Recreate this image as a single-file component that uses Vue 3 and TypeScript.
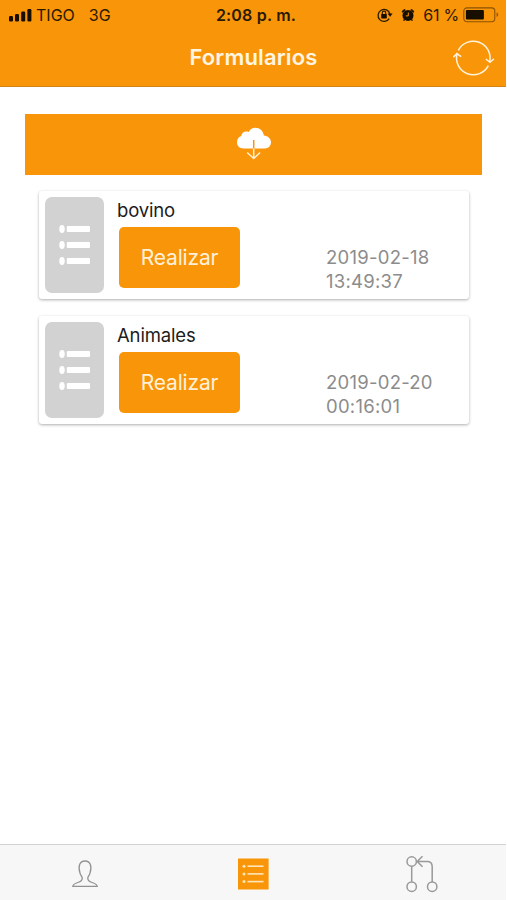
<script setup lang="ts">
interface FormItem {
  name: string
  date: string
  time: string
}

const forms: FormItem[] = [
  { name: 'bovino', date: '2019-02-18', time: '13:49:37' },
  { name: 'Animales', date: '2019-02-20', time: '00:16:01' },
]
</script>

<template>
  <div class="screen">
    <header class="header">
      <div class="status">
        <div class="status-left">
          <svg class="signal" width="24" height="14" viewBox="0 0 24 14">
            <rect x="1" y="8" width="4" height="5.5" rx="1.2" />
            <rect x="7" y="6" width="4" height="7.5" rx="1.2" />
            <rect x="13.2" y="3.5" width="4" height="10" rx="1.2" />
            <rect x="19.4" y="1" width="4" height="12.5" rx="1.2" />
          </svg>
          <span class="carrier">TIGO</span>
          <span class="network">3G</span>
        </div>
        <span class="clock">2:08 p. m.</span>
        <div class="status-right">
          <svg class="lock" width="18" height="16" viewBox="0 0 18 16">
            <path d="M13.2 11.6A6 6 0 1 1 13.9 7" fill="none" stroke="#2a1a00" stroke-width="1.3" />
            <path d="M11.6 6.6h5l-2.5 3.2z" />
            <rect x="5.2" y="7" width="5.6" height="4.4" rx="0.6" />
            <path d="M6.3 7.2V5.8a1.7 1.7 0 0 1 3.4 0v1.4" fill="none" stroke="#2a1a00" stroke-width="1.1" />
          </svg>
          <svg class="alarm" width="14" height="14" viewBox="0 0 14 14">
            <circle cx="7" cy="7.4" r="5.5" />
            <path d="M1.8 3.6 3.6 2.1M12.2 3.6 10.4 2.1" stroke="#2a1a00" stroke-width="2" stroke-linecap="round" />
            <path d="M3.6 11.4 2.9 12.3M10.4 11.4l.7.9" stroke="#2a1a00" stroke-width="1.4" stroke-linecap="round" />
            <path d="M7.3 4.5v3.4H4.8" fill="none" stroke="#f99509" stroke-width="1" />
          </svg>
          <span class="percent">61 %</span>
          <svg class="battery" width="37" height="16" viewBox="0 0 37 16">
            <rect x="0.8" y="0.9" width="31" height="13.8" rx="3.2" fill="none" stroke="#8a5305" stroke-width="1.1" />
            <rect x="2.9" y="3" width="18" height="9.6" rx="1" />
            <path d="M33.6 5.6c2 .6 2 3.8 0 4.4z" fill="#8a5305" />
          </svg>
        </div>
      </div>
      <div class="nav">
        <h1 class="title">Formularios</h1>
        <svg class="refresh" width="42" height="38" viewBox="0 0 42 38" fill="none" stroke="#fff3dc" stroke-width="1.5">
          <path d="M5.3 11.4A16.8 16.8 0 0 1 36.6 23" />
          <path d="M4 15A16.8 16.8 0 0 0 35.3 26.6" />
          <path d="M32.8 20l4.2 3.3 4-3.5M.3 18.2l3.6-3.6 4.2 3" />
        </svg>
      </div>
    </header>

    <main class="content">
      <button class="download" type="button" aria-label="Descargar">
        <svg width="36" height="34" viewBox="0 0 36 34">
          <path d="M7.5 21.5C3.5 21.5 1 18.8 1 15.3 1 12 3 9.6 5.3 9.1 5.4 5.5 9 3.6 12.8 5 14.3 2 16.5 .7 19.3 .7c4.600 0 8 3.300 8.500 7.700 4.200.3 7.200 3.200 7.200 6.900 0 3.600-2.600 6.200-6.200 6.200z" fill="#fff" />
          <path d="M17.700 13V22" stroke="#f99509" stroke-width="1.500" />
          <path d="M17.700 21.500V31.500M11.200 25.500l6.500 6 6.400-6" fill="none" stroke="#fff0d2" stroke-width="1.500" />
        </svg>
      </button>

      <ul class="list">
        <li v-for="form in forms" :key="form.name" class="card">
          <div class="thumb">
            <svg width="34" height="44" viewBox="0 0 34 44" fill="#fff">
              <g v-for="row in 3" :key="row">
                <ellipse cx="4" :cy="row * 16 - 10" rx="2.700" ry="4.100" />
                <rect x="8.800" :y="row * 16 - 13" width="23.200" height="6" rx="1" />
              </g>
            </svg>
          </div>
          <div class="info">
            <h2 class="name">{{ form.name }}</h2>
            <button class="action" type="button">Realizar</button>
          </div>
          <p class="date">{{ form.date }}<br />{{ form.time }}</p>
        </li>
      </ul>
    </main>

    <nav class="tabs">
      <a class="tab">
        <svg class="person" width="28" height="30" viewBox="0 0 28 30" fill="none" stroke="#929292" stroke-width="1.300">
          <path d="M1.800 27.400c.2-2.300 2.200-3 5-3.900 3.300-1 4.700-2.200 4.400-4.700-.2-1.500-1.500-2.300-2.200-4.700C6.800 7.500 8.600 2 14 2s7.200 5.500 5 12.100c-.7 2.400-2 3.200-2.200 4.700-.3 2.500 1.100 3.700 4.400 4.700 2.800.9 4.800 1.600 5 3.900z" />
        </svg>
      </a>
      <a class="tab">
        <svg width="32" height="32" viewBox="0 0 32 32">
          <rect x="1" y="0.500" width="30.600" height="31" fill="#f99509" />
          <g v-for="row in 3" :key="row" fill="#ffe6b8">
            <circle cx="7" :cy="row * 7.700 + 0.500" r="1.500" />
            <rect x="10.500" :y="row * 7.700 - 0.300" width="16" height="1.600" />
          </g>
        </svg>
      </a>
      <a class="tab">
        <svg width="34" height="38" viewBox="0 0 34 38" fill="none" stroke="#999" stroke-width="1.500">
          <circle cx="6.700" cy="6.500" r="4.700" />
          <circle cx="6.700" cy="31.700" r="4.700" />
          <circle cx="27.200" cy="31.700" r="4.700" />
          <path d="M6.700 11.200v15.800M27.200 27V11.700Q27.200 6.500 22 6.500H12.200M17.500 1.200l-5.300 5.300 5.300 5.300" />
        </svg>
      </a>
    </nav>
  </div>
</template>

<style>
body {
  margin: 0;
  background: #fff;
}
</style>

<style scoped>
.screen {
  width: 506px;
  height: 900px;
  display: flex;
  flex-direction: column;
  overflow: hidden;
  background: #fff;
  font-family: Inter, 'Liberation Sans', sans-serif;
}

.header {
  box-sizing: border-box;
  height: 87px;
  background: #f99509;
  border-bottom: 1px solid #d58418;
}

.status {
  height: 30px;
  display: grid;
  grid-template-columns: 1fr auto 1fr;
  align-items: center;
  padding: 0 6px 0 8px;
  font-size: 16px;
  line-height: 20px;
  color: #2a1a00;
}

.status svg {
  fill: #170e00;
}

.status-left,
.status-right {
  display: flex;
  align-items: center;
}

.status-right {
  justify-content: flex-end;
}

.carrier {
  margin-left: 4px;
}

.network {
  margin-left: 14px;
}

.clock {
  margin: 0 -2px 0 2px;
  font-weight: 600;
  letter-spacing: 0.2px;
}

.alarm {
  margin-left: 7px;
}

.percent {
  margin: 0 4px 0 8px;
  letter-spacing: -0.2px;
}

.nav {
  height: 56px;
  display: grid;
  grid-template-columns: 1fr auto 1fr;
  align-items: center;
  padding-right: 11px;
}

.title {
  grid-column: 2;
  margin: 0 -6px 2px 6px;
  font-size: 22px;
  line-height: 28px;
  font-weight: 600;
  letter-spacing: 0.15px;
  color: #fff5e2;
}

.refresh {
  justify-self: end;
}

.content {
  flex: 1;
  padding: 27px 24px 0 25px;
}

.download {
  width: 100%;
  height: 61px;
  padding: 0 0 1px;
  border: 0;
  display: flex;
  align-items: center;
  justify-content: center;
  background: #f99509;
}

.list {
  list-style: none;
  margin: 16px 13px 0 14px;
  padding: 0;
  display: flex;
  flex-direction: column;
  gap: 17px;
}

.card {
  box-sizing: border-box;
  height: 108px;
  display: flex;
  padding: 6px;
  border-radius: 3px;
  background: #fff;
  box-shadow: 0 1px 3px rgba(0, 0, 0, 0.32);
}

.thumb {
  width: 59px;
  height: 96px;
  display: flex;
  align-items: center;
  justify-content: center;
  border-radius: 7px;
  background: #d2d2d2;
}

.info {
  width: 209px;
  padding-left: 13px;
}

.name {
  margin: 1px 0 4px;
  font-size: 18.5px;
  line-height: 25px;
  font-weight: 400;
  letter-spacing: -0.15px;
  color: #1c1c1c;
}

.action {
  display: block;
  width: 121px;
  height: 61px;
  margin-left: 2px;
  padding: 0;
  border: 0;
  border-radius: 5px;
  background: #f99509;
  color: #fff1d8;
  font: 400 21px/61px Inter, 'Liberation Sans', sans-serif;
  letter-spacing: -0.15px;
}

.date {
  margin: 48px 0 0;
  font-size: 18.5px;
  line-height: 24px;
  letter-spacing: 0.25px;
  color: #8c8c8c;
}

.tabs {
  box-sizing: border-box;
  height: 56px;
  display: grid;
  grid-template-columns: repeat(3, 1fr);
  border-top: 1px solid #d2d2d2;
  background: #f7f7f7;
}

.tab {
  display: flex;
  align-items: center;
  justify-content: center;
  padding-top: 3px;
}

.person {
  margin-left: 2px;
}
</style>
